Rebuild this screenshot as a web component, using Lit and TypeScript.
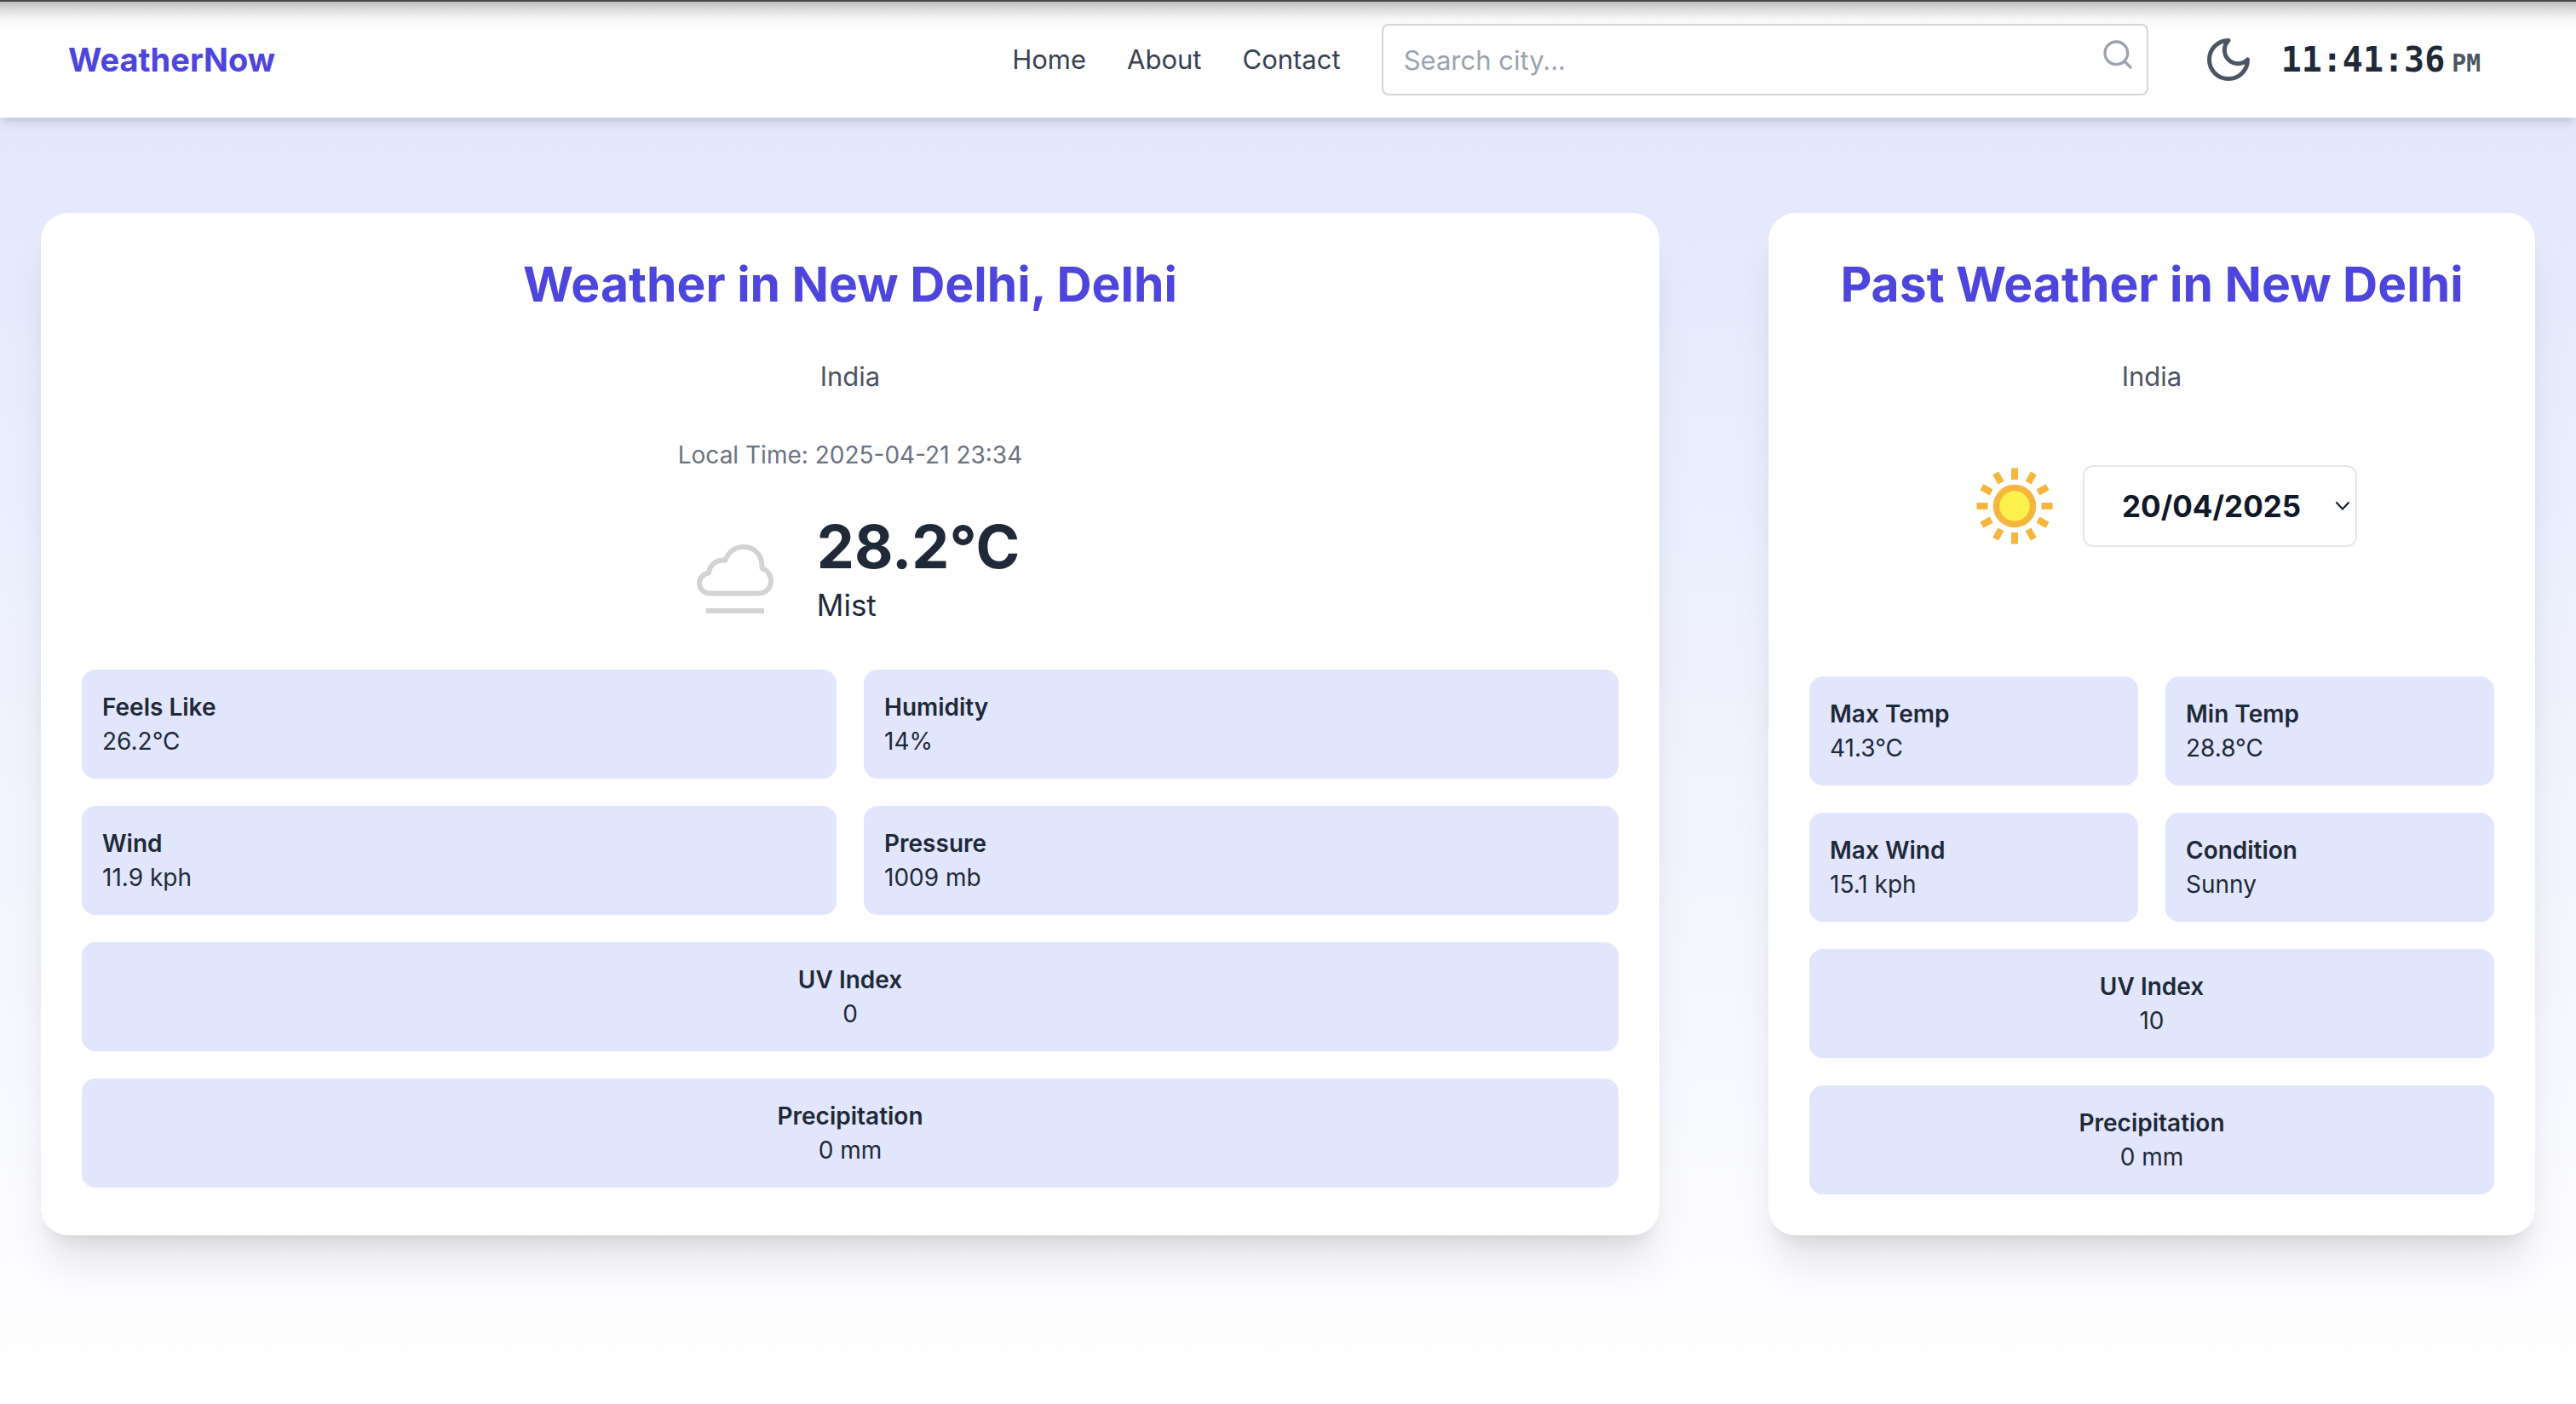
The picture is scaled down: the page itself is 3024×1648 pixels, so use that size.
import { LitElement, html, css } from "lit";
import { customElement, property, state } from "lit/decorators.js";
import { classMap } from "lit/directives/class-map.js";

interface Stat {
  label: string;
  value: string;
  wide?: boolean;
}

const CURRENT: Stat[] = [
  { label: "Feels Like", value: "26.2°C" },
  { label: "Humidity", value: "14%" },
  { label: "Wind", value: "11.9 kph" },
  { label: "Pressure", value: "1009 mb" },
  { label: "UV Index", value: "0", wide: true },
  { label: "Precipitation", value: "0 mm", wide: true },
];

const PAST: Stat[] = [
  { label: "Max Temp", value: "41.3°C" },
  { label: "Min Temp", value: "28.8°C" },
  { label: "Max Wind", value: "15.1 kph" },
  { label: "Condition", value: "Sunny" },
  { label: "UV Index", value: "10", wide: true },
  { label: "Precipitation", value: "0 mm", wide: true },
];

@customElement("stat-grid")
export class StatGrid extends LitElement {
  @property({ attribute: false }) stats: Stat[] = [];

  static styles = css`
    :host {
      display: block;
    }
    .grid {
      display: grid;
      grid-template-columns: repeat(2, minmax(0, 1fr));
      gap: 32px;
      margin: 0;
    }
    .tile {
      padding: 24px;
      border-radius: 16px;
      background: #e1e6fd;
      color: #1f2937;
      font-size: 28px;
      line-height: 40px;
    }
    .wide {
      grid-column: 1 / -1;
      text-align: center;
    }
    .label {
      font-weight: 600;
    }
    .value {
      margin: 0;
    }
  `;

  render() {
    return html`<dl class="grid">
      ${this.stats.map(
        (s) => html`<div class=${classMap({ tile: true, wide: !!s.wide })}>
          <dt class="label">${s.label}</dt>
          <dd class="value">${s.value}</dd>
        </div>`
      )}
    </dl>`;
  }
}

@customElement("nav-bar")
export class NavBar extends LitElement {
  static styles = css`
    :host {
      display: block;
      position: relative;
      z-index: 1;
    }
    .bar {
      display: flex;
      align-items: center;
      padding: 26px 112px 26px 80px;
      border-top: 2px solid #484646;
      background: linear-gradient(#bdbdbd, #dedede 10px, #f6f6f6 20px, #fff 32px);
      box-shadow: 0 8px 12px -2px rgba(0, 0, 0, 0.1), 0 4px 8px -4px rgba(0, 0, 0, 0.1);
    }
    a {
      color: inherit;
      text-decoration: none;
    }
    .logo {
      margin-right: auto;
      color: #4e45dc;
      font-size: 38px;
      font-weight: 700;
      line-height: 56px;
    }
    .links {
      display: flex;
      gap: 48px;
      margin-right: 48px;
      color: #374151;
      font-size: 31px;
      line-height: 48px;
    }
    .search {
      position: relative;
      flex: 0 1 900px;
      min-width: 0;
    }
    .box {
      display: block;
      box-sizing: border-box;
      width: 100%;
      height: 84px;
      padding: 0 80px 0 24px;
      border: 2px solid #d1d5db;
      border-radius: 8px;
      background: #fff;
      color: #374151;
      font: inherit;
      font-size: 31px;
    }
    .box::placeholder {
      color: #9ca3af;
      opacity: 1;
    }
    button {
      display: block;
      padding: 0;
      border: 0;
      background: none;
      cursor: pointer;
    }
    svg {
      display: block;
    }
    .go {
      position: absolute;
      top: 16px;
      right: 16px;
      color: #9ca3af;
    }
    .theme {
      margin: 0 32px 0 64px;
      color: #4b5563;
    }
    .clock {
      display: flex;
      align-items: baseline;
      gap: 8px;
      color: #1f2937;
      font-family: "DejaVu Sans Mono", monospace;
      font-size: 40px;
      font-weight: 700;
      line-height: 56px;
    }
    .period {
      color: #4b5563;
      font-size: 28px;
      line-height: 40px;
    }
  `;

  render() {
    return html`<header class="bar">
      <a class="logo" href="#">WeatherNow</a>
      <nav class="links">
        <a href="#home">Home</a>
        <a href="#about">About</a>
        <a href="#contact">Contact</a>
      </nav>
      <form class="search" @submit=${(e: Event) => e.preventDefault()}>
        <input class="box" type="text" placeholder="Search city..." aria-label="Search city" />
        <button class="go" type="submit" aria-label="Search">
          <svg width="40" height="40" viewBox="0 0 24 24" fill="none" stroke="currentColor"
            stroke-width="2" stroke-linecap="round" stroke-linejoin="round">
            <circle cx="11" cy="11" r="8"></circle>
            <path d="m21 21-4.3-4.3"></path>
          </svg>
        </button>
      </form>
      <button class="theme" type="button" aria-label="Toggle dark mode">
        <svg width="60" height="60" viewBox="0 0 24 24" fill="none" stroke="currentColor"
          stroke-width="2" stroke-linecap="round" stroke-linejoin="round">
          <path d="M12 3a6 6 0 0 0 9 9 9 9 0 1 1-9-9Z"></path>
        </svg>
      </button>
      <time class="clock">11:41:36<span class="period">PM</span></time>
    </header>`;
  }
}

@customElement("app-root")
export class AppRoot extends LitElement {
  @state() private date = "20/04/2025";

  static styles = css`
    :host {
      display: flex;
      flex-direction: column;
      min-height: 100vh;
      background: linear-gradient(to bottom, #e0e5fc, #fff);
      color: #1f2937;
      font-family: Inter, "Liberation Sans", sans-serif;
    }
    .page {
      display: grid;
      grid-template-columns: minmax(0, 19fr) minmax(0, 9fr);
      gap: 128px;
      padding: 112px 48px;
    }
    .card {
      padding: 48px;
      border-radius: 32px;
      background: #fff;
      box-shadow: 0 40px 50px -10px rgba(0, 0, 0, 0.1), 0 16px 20px -12px rgba(0, 0, 0, 0.1);
    }
    .title {
      margin: 0 0 48px;
      color: #4e45dc;
      font-size: 57px;
      font-weight: 700;
      line-height: 72px;
      text-align: center;
    }
    .country {
      margin: 0;
      color: #4b5563;
      font-size: 31px;
      line-height: 48px;
      text-align: center;
    }
    .local {
      margin: 48px 0;
      color: #6b7280;
      font-size: 28px;
      line-height: 40px;
      text-align: center;
    }
    svg {
      display: block;
      flex: none;
    }
    .now {
      display: flex;
      justify-content: center;
      align-items: center;
      gap: 32px;
      margin-bottom: 48px;
    }
    .temp {
      margin: 0;
      font-size: 70px;
      font-weight: 700;
      line-height: 80px;
    }
    .sky {
      margin: 0;
      font-size: 35px;
      line-height: 56px;
    }
    .day {
      display: flex;
      justify-content: center;
      align-items: center;
      gap: 16px;
      margin: 64px 0 136px;
      padding-left: 16px;
    }
    .picker {
      position: relative;
    }
    .select {
      display: block;
      box-sizing: border-box;
      width: 322px;
      height: 96px;
      padding: 0 44px;
      appearance: none;
      border: 2px solid #e5e7eb;
      border-radius: 12px;
      background: #fff;
      color: #111827;
      font: inherit;
      font-size: 35px;
      font-weight: 700;
    }
    .chevron {
      position: absolute;
      top: 42px;
      right: 8px;
      pointer-events: none;
    }
  `;

  private pick(e: Event) {
    this.date = (e.target as HTMLSelectElement).value;
  }

  private sun() {
    return html`<svg width="128" height="128" viewBox="0 0 128 128" aria-hidden="true">
      <circle cx="64" cy="64" r="21.5" fill="#fdf04d" stroke="#f6b53c" stroke-width="7.5"></circle>
      <path
        d="M64 19.5v13.5M64 95v13.5M19.5 64h13M95.5 64h13M41.7 25.4l6.3 11.2M80 91.4l6.3 11.2M86.3 25.4l-6.3 11.2M48 91.4l-6.3 11.2M25.4 41.7l11.2 6.3M91.4 80l11.2 6.3M25.4 86.3l11.2-6.3M91.4 48l11.2-6.3"
        stroke="#f6b53c" stroke-width="8"></path>
    </svg>`;
  }

  render() {
    return html`
      <nav-bar></nav-bar>
      <main class="page">
        <section class="card">
          <h1 class="title">Weather in New Delhi, Delhi</h1>
          <p class="country">India</p>
          <p class="local">Local Time: 2025-04-21 23:34</p>
          <div class="now">
            <svg width="128" height="128" viewBox="0 0 128 128" fill="none" stroke="#d3d3d3"
              stroke-width="6" stroke-linejoin="round" aria-hidden="true">
              <path d="M34 90.5C26.5 90.5 22 84.5 22 78.5C22 72.5 26.5 67.5 33 66.5C34 57 42 50.5 52.5 51.5C56 42 64 36 74 36C87 36 96.5 46 95.5 61C102 63.5 106 69.5 106 76C106 84 100 90.5 92 90.5Z"></path>
              <path d="M30 111h68"></path>
            </svg>
            <div>
              <p class="temp">28.2°C</p>
              <p class="sky">Mist</p>
            </div>
          </div>
          <stat-grid .stats=${CURRENT}></stat-grid>
        </section>
        <section class="card">
          <h2 class="title">Past Weather in New Delhi</h2>
          <p class="country">India</p>
          <div class="day">
            ${this.sun()}
            <div class="picker">
              <select class="select" aria-label="Date" @change=${this.pick}>
                <option selected>${this.date}</option>
              </select>
              <svg class="chevron" width="18" height="12" viewBox="0 0 18 12" fill="none"
                stroke="#111827" stroke-width="2" stroke-linecap="round" aria-hidden="true">
                <path d="M2 2l7 7.5 7-7.5"></path>
              </svg>
            </div>
          </div>
          <stat-grid .stats=${PAST}></stat-grid>
        </section>
      </main>
    `;
  }
}
